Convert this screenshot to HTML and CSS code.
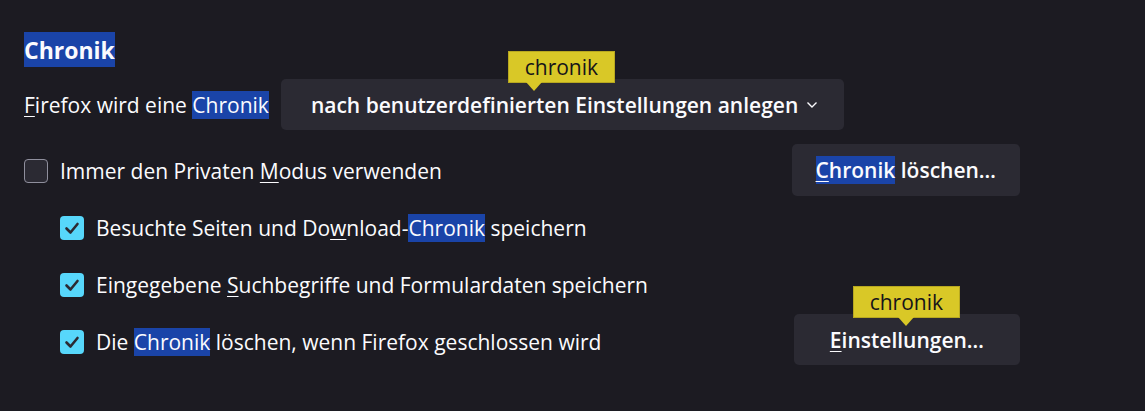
FILE: index.html
```html
<!DOCTYPE html>
<html lang="de">
<head>
<meta charset="utf-8">
<title>Chronik</title>
<link rel="stylesheet" href="styles.css">
</head>
<body>
<main class="section">
  <h2 class="heading"><mark class="hl hl-head">Chronik</mark></h2>
  <div class="mode-row">
    <span class="mode-label"><u>F</u>irefox wird eine <mark class="hl">Chronik</mark></span>
    <div class="anchor">
      <button class="btn select"><span>nach benutzerdefinierten Einstellungen anlegen</span>
        <svg class="chev" width="12" height="8" viewBox="0 0 12 8"><path d="M1.5 1.5 L6 6 L10.5 1.5" fill="none" stroke="#fbfbfe" stroke-width="1.4"/></svg>
      </button>
      <span class="tip tip-select">chronik</span>
    </div>
  </div>
  <div class="options">
    <div class="opt-list">
      <label class="opt">
        <span class="box"></span>
        <span>Immer den Privaten <u>M</u>odus verwenden</span>
      </label>
      <label class="opt sub">
        <span class="box checked"><svg width="24" height="24" viewBox="0 0 24 24"><path d="M6.5 12.5 L10.5 16.5 L17.5 8" fill="none" stroke="#2b2a33" stroke-width="2.6" stroke-linecap="round" stroke-linejoin="round"/></svg></span>
        <span>Besuchte Seiten und Do<u>w</u>nload-<mark class="hl">Chronik</mark> speichern</span>
      </label>
      <label class="opt sub">
        <span class="box checked"><svg width="24" height="24" viewBox="0 0 24 24"><path d="M6.5 12.5 L10.5 16.5 L17.5 8" fill="none" stroke="#2b2a33" stroke-width="2.6" stroke-linecap="round" stroke-linejoin="round"/></svg></span>
        <span>Eingegebene <u>S</u>uchbegriffe und Formulardaten speichern</span>
      </label>
      <label class="opt sub">
        <span class="box checked"><svg width="24" height="24" viewBox="0 0 24 24"><path d="M6.5 12.5 L10.5 16.5 L17.5 8" fill="none" stroke="#2b2a33" stroke-width="2.6" stroke-linecap="round" stroke-linejoin="round"/></svg></span>
        <span>Die <mark class="hl">Chronik</mark> löschen, wenn Firefox <u>g</u>eschlossen wird</span>
      </label>
    </div>
    <div class="actions">
      <button class="btn action clear"><span><mark class="hl"><u>C</u>hronik</mark> löschen…</span></button>
      <div class="anchor">
        <button class="btn action settings"><span><u>E</u>instellungen…</span></button>
        <span class="tip tip-settings">chronik</span>
      </div>
    </div>
  </div>
</main>
</body>
</html>
```

FILE: styles.css
```css
html, body {
  margin: 0;
  padding: 0;
  background: #1c1b22;
}
body {
  font-family: "Open Sans", "Noto Sans", sans-serif;
  font-size: 21px;
  color: #fbfbfe;
  width: 1145px;
  height: 411px;
  overflow: hidden;
}
.section {
  padding: 31px 125px 0 24px;
}
.hl {
  background: #1a44a8;
  color: #fbfbfe;
}
.hl-head {
  padding: 2px 0 1px;
}
u {
  text-decoration-thickness: 1px;
  text-underline-offset: 3px;
}
.heading {
  margin: 0;
  font-size: 23px;
  font-weight: 700;
  line-height: 38px;
}
.mode-row {
  display: flex;
  align-items: center;
  gap: 12px;
  margin-top: 10px;
}
.anchor {
  position: relative;
}
.btn {
  font-family: inherit;
  font-size: 21px;
  font-weight: 600;
  color: #fbfbfe;
  background: #2b2a33;
  border: none;
  border-radius: 5px;
  height: 51px;
  display: flex;
  align-items: center;
}
.select {
  padding: 0 26px 0 30px;
  gap: 8px;
}
.chev {
  margin-top: 1px;
}
.tip {
  position: absolute;
  height: 30px;
  width: 105px;
  background: #d9c827;
  border: 1px solid #b8a820;
  color: #15141a;
  font-size: 21px;
  line-height: 30px;
  text-align: center;
  top: -28px;
}
.tip::after {
  content: "";
  position: absolute;
  bottom: -9px;
  width: 0;
  height: 0;
  border-left: 8px solid transparent;
  border-right: 8px solid transparent;
  border-top: 9px solid #d9c827;
}
.tip-select { left: 227px; }
.tip-select::after { left: 17px; }
.tip-settings { left: 59px; }
.tip-settings::after { left: 44px; }
.options {
  display: flex;
  justify-content: space-between;
  margin-top: 12px;
}
.opt-list {
  display: flex;
  flex-direction: column;
}
.opt {
  display: flex;
  align-items: center;
  gap: 12px;
  height: 57px;
}
.opt.sub {
  padding-left: 36px;
}
.box {
  width: 24px;
  height: 24px;
  box-sizing: border-box;
  border: 1px solid #8f8f9d;
  border-radius: 4px;
  background: #2b2a33;
  flex: none;
  display: flex;
}
.box.checked {
  background: #57d7fb;
  border: none;
}
.actions {
  display: flex;
  flex-direction: column;
  align-items: flex-end;
  padding-top: 2px;
}
.action {
  padding: 0 24px;
}
.clear {
  height: 52px;
}
.settings {
  padding: 0 36px;
}
.actions .anchor {
  margin-top: 118px;
}
```
